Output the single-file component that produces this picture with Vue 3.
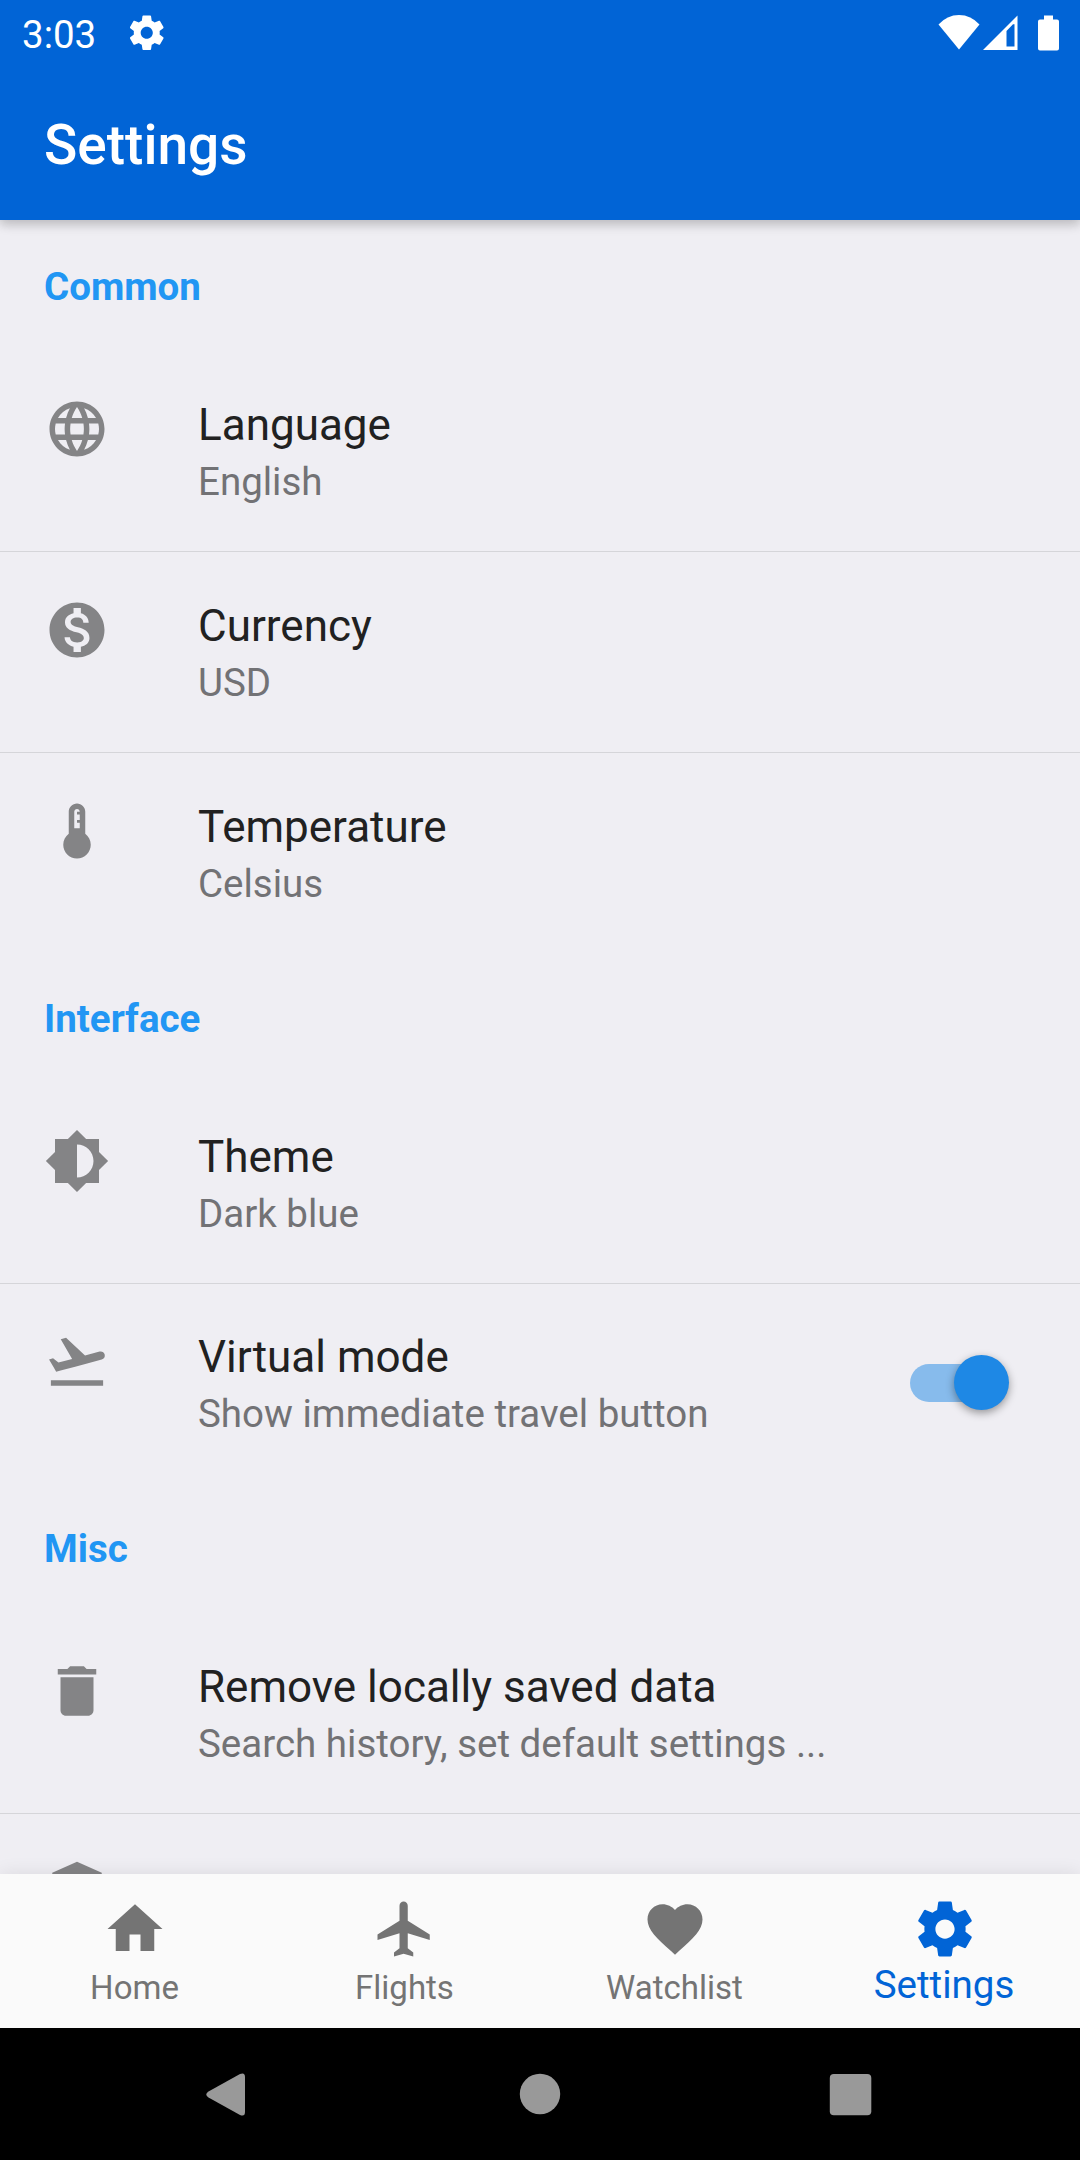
<script setup>
const icons = {
  globe: 'M11.99 2C6.47 2 2 6.48 2 12s4.47 10 9.99 10C17.52 22 22 17.52 22 12S17.52 2 11.99 2zm6.93 6h-2.95c-.32-1.25-.78-2.45-1.38-3.56 1.84.63 3.37 1.91 4.33 3.56zM12 4.04c.83 1.2 1.48 2.53 1.91 3.96h-3.82c.43-1.43 1.08-2.76 1.91-3.96zM4.26 14C4.1 13.36 4 12.69 4 12s.1-1.36.26-2h3.38c-.08.66-.14 1.32-.14 2s.06 1.34.14 2H4.26zm.82 2h2.95c.32 1.25.78 2.45 1.38 3.56-1.84-.63-3.37-1.9-4.33-3.56zm2.95-8H5.08c.96-1.66 2.49-2.93 4.33-3.56C8.81 5.55 8.35 6.75 8.03 8zM12 19.96c-.83-1.2-1.48-2.53-1.91-3.96h3.82c-.43 1.43-1.08 2.76-1.91 3.96zM14.34 14H9.66c-.09-.66-.16-1.32-.16-2s.07-1.35.16-2h4.68c.09.65.16 1.32.16 2s-.07 1.34-.16 2zm.25 5.56c.6-1.11 1.06-2.31 1.38-3.56h2.95c-.96 1.65-2.49 2.93-4.33 3.56zM16.36 14c.08-.66.14-1.32.14-2s-.06-1.34-.14-2h3.38c.16.64.26 1.31.26 2s-.1 1.36-.26 2h-3.38z',
  money: 'M12 2C6.48 2 2 6.48 2 12s4.48 10 10 10 10-4.48 10-10S17.52 2 12 2zm1.41 16.09V20h-2.67v-1.93c-1.71-.36-3.16-1.46-3.27-3.4h1.96c.1 1.05.82 1.87 2.65 1.87 1.96 0 2.4-.98 2.4-1.59 0-.83-.44-1.61-2.67-2.14-2.48-.6-4.18-1.62-4.18-3.67 0-1.72 1.39-2.84 3.11-3.21V4h2.67v1.95c1.86.45 2.79 1.86 2.85 3.39H14.3c-.05-1.11-.64-1.87-2.22-1.87-1.5 0-2.4.68-2.4 1.64 0 .84.65 1.39 2.67 1.91s4.18 1.39 4.18 3.91c-.01 1.83-1.38 2.83-3.12 3.16z',
  thermometer: 'M15 13V5c0-1.66-1.34-3-3-3S9 3.34 9 5v8c-1.21.91-2 2.37-2 4 0 2.76 2.24 5 5 5s5-2.24 5-5c0-1.63-.79-3.09-2-4zm-4-8c0-.55.45-1 1-1s1 .45 1 1h-1v1h1v2h-1v1h1v2h-2V5z',
  brightness: 'M20 15.31L23.31 12 20 8.69V4h-4.69L12 .69 8.69 4H4v4.69L.69 12 4 15.31V20h4.69L12 23.31 15.31 20H20v-4.69zM12 18V6c3.31 0 6 2.69 6 6s-2.69 6-6 6z',
  takeoff: 'M2.5 19h19v2h-19zm19.57-9.36c-.21-.8-1.04-1.28-1.84-1.06L14.92 10l-6.9-6.43-1.93.51 4.14 7.17-4.97 1.33-1.97-1.54-1.45.39 1.82 3.16.77 1.33 1.6-.43 5.31-1.42 4.35-1.16L21 11.49c.81-.23 1.28-1.05 1.07-1.85z',
  trash: 'M6 19c0 1.1.9 2 2 2h8c1.1 0 2-.9 2-2V7H6v12zM19 4h-3.5l-1-1h-5l-1 1H5v2h14V4z',
  shield: 'M12 1L3 5v6c0 5.55 3.84 10.74 9 12 5.16-1.26 9-6.45 9-12V5l-9-4z',
  home: 'M10 20v-6h4v6h5v-8h3L12 3 2 12h3v8z',
  plane: 'M21 16v-2l-8-5V3.5c0-.83-.67-1.5-1.5-1.5S10 2.67 10 3.5V9l-8 5v2l8-2.5V19l-2 1.5V22l3.5-1 3.5 1v-1.5L13 19v-5.5l8 2.5z',
  heart: 'M12 21.35l-1.45-1.32C5.4 15.36 2 12.28 2 8.5 2 5.42 4.42 3 7.5 3c1.74 0 3.41.81 4.5 2.09C13.09 3.81 14.76 3 16.5 3 19.58 3 22 5.42 22 8.5c0 3.78-3.4 6.86-8.55 11.54L12 21.35z',
  gear: 'M19.43 12.98c.04-.32.07-.64.07-.98s-.03-.66-.07-.98l2.11-1.65c.19-.15.24-.42.12-.64l-2-3.46c-.12-.22-.39-.3-.61-.22l-2.49 1c-.52-.4-1.08-.73-1.69-.98l-.38-2.65C14.46 2.18 14.25 2 14 2h-4c-.25 0-.46.18-.49.42l-.38 2.65c-.61.25-1.17.59-1.69.98l-2.49-1c-.23-.09-.49 0-.61.22l-2 3.46c-.13.22-.07.49.12.64l2.11 1.65c-.04.32-.07.65-.07.98s.03.66.07.98l-2.11 1.65c-.19.15-.24.42-.12.64l2 3.46c.12.22.39.3.61.22l2.49-1c.52.4 1.08.73 1.69.98l.38 2.65c.03.24.24.42.49.42h4c.25 0 .46-.18.49-.42l.38-2.65c.61-.25 1.17-.59 1.69-.98l2.49 1c.23.09.49 0 .61-.22l2-3.46c.12-.22.07-.49-.12-.64l-2.11-1.65zM12 15.5c-1.93 0-3.5-1.57-3.5-3.5s1.57-3.5 3.5-3.5 3.5 1.57 3.5 3.5-1.57 3.5-3.5 3.5z',
}

const sections = [
  {
    title: 'Common',
    rows: [
      { icon: 'globe', title: 'Language', sub: 'English' },
      { icon: 'money', title: 'Currency', sub: 'USD' },
      { icon: 'thermometer', title: 'Temperature', sub: 'Celsius' },
    ],
  },
  {
    title: 'Interface',
    rows: [
      { icon: 'brightness', title: 'Theme', sub: 'Dark blue' },
      { icon: 'takeoff', title: 'Virtual mode', sub: 'Show immediate travel button', toggle: true },
    ],
  },
  {
    title: 'Misc',
    rows: [
      { icon: 'trash', title: 'Remove locally saved data', sub: 'Search history, set default settings ...' },
      { icon: 'shield', title: '', sub: '' },
    ],
  },
]

const tabs = [
  { icon: 'home', label: 'Home' },
  { icon: 'plane', label: 'Flights' },
  { icon: 'heart', label: 'Watchlist' },
  { icon: 'gear', label: 'Settings', active: true },
]
</script>

<template>
  <div class="screen">
    <header class="top">
      <div class="status">
        <span class="time">3:03</span>
        <svg class="status-gear" viewBox="0 0 24 24"><path :d="icons.gear" /></svg>
        <svg class="status-icons" viewBox="0 0 124 40">
          <path d="M0.500 11.500Q9 2 21 2T41.500 11.500L21 36.500Z" />
          <path fill-rule="evenodd" d="M45 37L79.500 2.500V37ZM68.500 18V33.500H76.500V11.300L75 11.300Z" />
          <path d="M106 2.500h9v4h4q2 0 2 2v27q0 2-2 2h-17q-2 0-2-2v-27q0-2 2-2h4Z" />
        </svg>
      </div>
      <h1>Settings</h1>
    </header>

    <main class="list">
      <section v-for="s in sections" :key="s.title">
        <h2>{{ s.title }}</h2>
        <div v-for="r in s.rows" :key="r.icon" class="row" :class="{ toggled: r.toggle }">
          <svg class="icon" viewBox="0 0 24 24"><path :d="icons[r.icon]" /></svg>
          <div class="text">
            <div class="title">{{ r.title }}</div>
            <div class="sub">{{ r.sub }}</div>
          </div>
          <div v-if="r.toggle" class="switch"><div class="thumb"></div></div>
        </div>
      </section>
    </main>

    <nav class="tabs">
      <div v-for="t in tabs" :key="t.label" class="tab" :class="{ active: t.active }">
        <svg class="icon" viewBox="0 0 24 24"><path :d="icons[t.icon]" /></svg>
        <span>{{ t.label }}</span>
      </div>
    </nav>

    <footer class="system">
      <svg viewBox="0 0 48 48"><path d="M5.500 21.500L37 4Q42 2 42 7V42Q42 47 37 45L5.500 27.500Q1 24.500 5.500 21.500Z" /></svg>
      <svg viewBox="0 0 48 48"><circle cx="25" cy="24" r="20.200" /></svg>
      <svg viewBox="0 0 48 48"><rect x="2.800" y="4" width="41.500" height="41.300" rx="4" /></svg>
    </footer>
  </div>
</template>

<style>
body {
  margin: 0;
}
</style>

<style scoped>
.screen {
  width: 1080px;
  height: 2160px;
  display: flex;
  flex-direction: column;
  overflow: hidden;
  background: #efeef3;
  font-family: Roboto, "Liberation Sans", sans-serif;
  color: #212121;
}
svg {
  display: block;
  fill: currentColor;
  flex: none;
}
.top {
  height: 220px;
  flex: none;
  background: #0164d6;
  color: #fff;
  z-index: 1;
  box-shadow: 0 2px 14px rgba(0, 0, 0, 0.14), 0 5px 9px rgba(0, 0, 0, 0.12);
}
.status {
  height: 66px;
  box-sizing: border-box;
  display: flex;
  align-items: center;
  padding: 0 18px 0 22px;
}
.time {
  font-size: 38.5px;
  line-height: 66px;
  width: 103.500px;
  padding-top: 3px;
}
.status-gear {
  width: 41.500px;
  height: 41.500px;
}
.status-icons {
  width: 124px;
  height: 40px;
  margin-left: auto;
}
h1 {
  margin: 0;
  padding-left: 44px;
  font-size: 55px;
  font-weight: 500;
  line-height: 158px;
}
.list {
  flex: 1;
  min-height: 0;
  overflow: hidden;
}
h2 {
  margin: 0;
  height: 131px;
  box-sizing: border-box;
  padding: 44px 44px 0;
  font-size: 38.5px;
  font-weight: 700;
  line-height: 46px;
  color: #2196f3;
}
.row {
  display: flex;
  height: 201px;
  box-sizing: border-box;
  padding: 45px 72px 0 44px;
  border-bottom: 1px solid #d5d5d9;
}
.row:last-child {
  height: 199px;
  border-bottom: 0;
}
.row.toggled {
  height: 198px;
  padding-top: 44px;
}
.icon {
  width: 66px;
  height: 66px;
}
.row .icon {
  color: #848486;
}
.text {
  flex: 1;
  margin-left: 88px;
  padding-top: 3px;
}
.title {
  font-size: 44px;
  line-height: 52px;
}
.sub {
  font-size: 38.5px;
  line-height: 62px;
  color: #727275;
}
.switch {
  width: 90.5px;
  height: 38.5px;
  margin: 35.5px 8px 0 0;
  border-radius: 20px;
  background: #87bbec;
  position: relative;
}
.thumb {
  position: absolute;
  left: 44px;
  top: -8.25px;
  width: 55px;
  height: 55px;
  border-radius: 50%;
  background: #1e88e5;
  box-shadow: 0 3px 8px rgba(0, 0, 0, 0.38);
}
.tabs {
  height: 154px;
  flex: none;
  display: flex;
  background: #fafafa;
  color: #747474;
  z-index: 1;
  box-shadow: 0 0 18px rgba(0, 0, 0, 0.09);
}
.tab {
  flex: 1;
  display: flex;
  flex-direction: column;
  align-items: center;
  padding-top: 22px;
}
.tab span {
  font-size: 33px;
  line-height: 40px;
  margin: 6px 1px 0 0;
}
.tab.active {
  color: #0164d6;
}
.tab.active span {
  font-size: 38.5px;
  margin: 3px 2px 0 0;
}
.system {
  height: 132px;
  flex: none;
  box-sizing: border-box;
  padding: 42px 205px 0 203px;
  display: flex;
  justify-content: space-between;
  background: #000;
  color: #999;
}
.system svg {
  width: 48px;
  height: 48px;
}
</style>
